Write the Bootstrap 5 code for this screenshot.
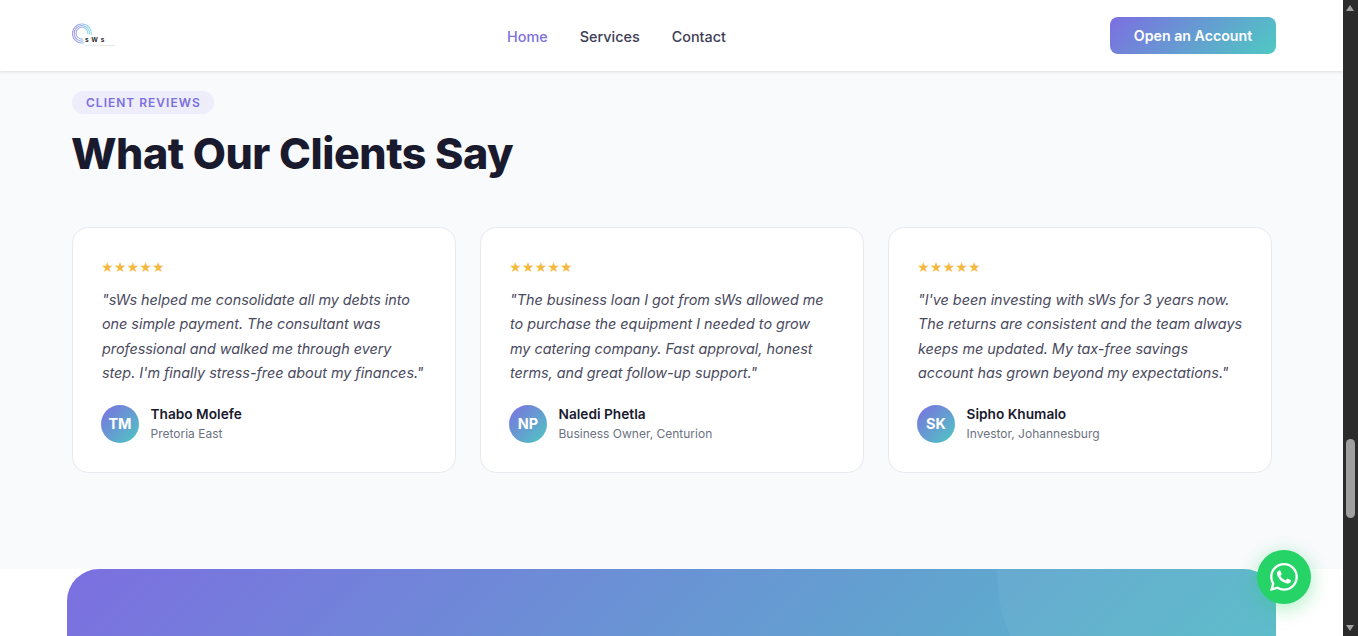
<!DOCTYPE html>
<html lang="en">
<head>
<meta charset="utf-8">
<title>Client Reviews</title>
<link href="https://cdn.jsdelivr.net/npm/bootstrap@5.3.0/dist/css/bootstrap.min.css" rel="stylesheet">
<style>
html,body{height:100%;overflow:hidden;margin:0}
body{font-family:Inter,"Liberation Sans",sans-serif;color:#1a1a2e;background:#fff}
.page-shell{width:1358px;height:636px;overflow:hidden;position:relative}
.page-main{width:1343px;height:636px;overflow:hidden}
.top-bar{height:71px;background:#fff;box-shadow:0 1px 3px rgba(26,26,46,.12);position:relative;z-index:2;padding:0 67px 0 72px}
.logo-box{width:44px;height:28px;flex:none}
.top-links{gap:32px;margin-left:7px;margin-top:3px}
.top-link{font-size:14.4px;font-weight:500;color:#3d3d56;text-decoration:none}
.top-link.is-active{color:#7c6fe0}
.open-btn{width:166px;height:37px;border-radius:8px;border:0;color:#fff;font-size:14.2px;font-weight:600;background:linear-gradient(135deg,#7c6fe0,#4ec9c3);padding:0}
.reviews-band{height:498px;background:#f9fafc;padding:18px 71px 0 72px}
.eyebrow{display:inline-block;height:23px;line-height:23px;padding:0 13px 0 14px;border-radius:50px;background:#eeedfb;color:#7c6fe0;font-size:12px;font-weight:600;letter-spacing:1px}
.big-title{font-size:43px;line-height:1.2;font-weight:800;color:#1a1a2e;margin:14px 0 0 -1px;letter-spacing:-.45px}
.review-row{display:grid;grid-template-columns:repeat(3,384px);gap:24px;margin-top:47px}
.review-box{height:246px;background:#fff;border:1px solid #e6e9f0;border-radius:16px;padding:30px 28px 0}
.stars{color:#f4b93e;font-size:12.2px;line-height:20px;height:20px}
.quote{font-size:14.4px;line-height:24.48px;font-style:italic;color:#4a4a5e;margin:10px 0 0;padding-left:1px;white-space:nowrap;letter-spacing:-.03px}
.person{margin-top:18px;gap:11.5px}
.avatar{width:38px;height:38px;border-radius:50%;background:linear-gradient(135deg,#7c6fe0,#4ec9c3);color:#fff;font-weight:700;font-size:14.4px;flex:none}
.person-info{padding-bottom:2px}
.person-name{font-size:13.7px;font-weight:600;line-height:20px;color:#1a1a2e}
.person-role{font-size:12px;line-height:19px;color:#6b7280}
.cta-band{height:67px;background:#fff;padding-left:67px}
.cta-panel{width:1209px;height:330px;border-radius:32px 32px 0 0;background:linear-gradient(135deg,#7c6fe0,#4ec9c3);position:relative;overflow:hidden}
.cta-ring{position:absolute;left:930px;top:-145px;width:300px;height:300px;border-radius:50%;background:rgba(255,255,255,.05)}
.wa-btn{position:absolute;right:47px;bottom:32px;width:54px;height:54px;border-radius:50%;background:#25d366;box-shadow:0 4px 20px rgba(37,211,102,.4);z-index:5}
.fake-scroll{position:absolute;top:0;right:0;width:15px;height:636px;background:#2b2b2b}
.scroll-thumb{position:absolute;top:439px;left:3px;width:9px;height:79px;border-radius:5px;background:#9f9f9f}
.arrow-up,.arrow-down{position:absolute;left:3px;width:0;height:0;border-left:4.5px solid transparent;border-right:4.5px solid transparent}
.arrow-up{top:5px;border-bottom:6px solid #9f9f9f}
.arrow-down{bottom:5px;border-top:6px solid #9f9f9f}
</style>
</head>
<body>
<div class="page-shell">
  <div class="page-main">
    <nav class="top-bar d-flex align-items-center justify-content-between">
      <a href="#" class="logo-box d-block">
        <svg width="44" height="28" viewBox="0 0 44 28" role="img" aria-label="sWs logo">
          <defs><linearGradient id="lg" gradientUnits="userSpaceOnUse" x1="1" y1="0" x2="20" y2="0"><stop offset="0" stop-color="#a79ae8"/><stop offset="1" stop-color="#92e4ea"/></linearGradient></defs>
          <g fill="none" stroke="url(#lg)" stroke-width="1.1">
            <path d="M12 20.8A9.5 9.5 0 1 1 19.3 13"/>
            <path d="M11.5 18.9A7.7 7.7 0 1 1 17.5 12.5"/>
            <path d="M11 17A5.9 5.9 0 1 1 15.8 12"/>
          </g>
          <text x="13" y="20" font-family="Liberation Sans" font-size="6.5" font-weight="700" fill="#222" letter-spacing="3">sWs</text>
          <rect x="13" y="23" width="30" height=".7" fill="#dcdce2"/>
        </svg>
      </a>
      <div class="top-links d-flex align-items-center">
        <a class="top-link is-active" href="#">Home</a>
        <a class="top-link" href="#">Services</a>
        <a class="top-link" href="#">Contact</a>
      </div>
      <button class="open-btn btn" type="button">Open an Account</button>
    </nav>
    <section class="reviews-band">
      <span class="eyebrow">CLIENT REVIEWS</span>
      <h2 class="big-title">What Our Clients Say</h2>
      <div class="review-row">
        <article class="review-box">
          <div class="stars">★★★★★</div>
          <p class="quote">"sWs helped me consolidate all my debts into<br>one simple payment. The consultant was<br>professional and walked me through every<br>step. I'm finally stress-free about my finances."</p>
          <div class="person d-flex align-items-center">
            <div class="avatar d-flex align-items-center justify-content-center">TM</div>
            <div class="person-info"><div class="person-name">Thabo Molefe</div><div class="person-role">Pretoria East</div></div>
          </div>
        </article>
        <article class="review-box">
          <div class="stars">★★★★★</div>
          <p class="quote">"The business loan I got from sWs allowed me<br>to purchase the equipment I needed to grow<br>my catering company. Fast approval, honest<br>terms, and great follow-up support."</p>
          <div class="person d-flex align-items-center">
            <div class="avatar d-flex align-items-center justify-content-center">NP</div>
            <div class="person-info"><div class="person-name">Naledi Phetla</div><div class="person-role">Business Owner, Centurion</div></div>
          </div>
        </article>
        <article class="review-box">
          <div class="stars">★★★★★</div>
          <p class="quote">"I've been investing with sWs for 3 years now.<br>The returns are consistent and the team always<br>keeps me updated. My tax-free savings<br>account has grown beyond my expectations."</p>
          <div class="person d-flex align-items-center">
            <div class="avatar d-flex align-items-center justify-content-center">SK</div>
            <div class="person-info"><div class="person-name">Sipho Khumalo</div><div class="person-role">Investor, Johannesburg</div></div>
          </div>
        </article>
      </div>
    </section>
    <section class="cta-band">
      <div class="cta-panel"><div class="cta-ring"></div></div>
    </section>
  </div>
  <a class="wa-btn d-flex align-items-center justify-content-center" href="#" aria-label="WhatsApp">
    <svg width="28" height="28" viewBox="0 0 16 16" fill="#fff"><path d="M13.601 2.326A7.854 7.854 0 0 0 7.994 0C3.627 0 .068 3.558.064 7.926c0 1.399.366 2.76 1.057 3.965L0 16l4.204-1.102a7.933 7.933 0 0 0 3.79.965h.004c4.368 0 7.926-3.558 7.93-7.93A7.898 7.898 0 0 0 13.6 2.326zM7.994 14.521a6.573 6.573 0 0 1-3.356-.92l-.24-.144-2.494.654.666-2.433-.156-.251a6.56 6.56 0 0 1-1.007-3.505c0-3.626 2.957-6.584 6.591-6.584a6.56 6.56 0 0 1 4.66 1.931 6.557 6.557 0 0 1 1.928 4.66c-.004 3.639-2.961 6.592-6.592 6.592zm3.615-4.934c-.197-.099-1.17-.578-1.353-.646-.182-.065-.315-.099-.445.099-.133.197-.513.646-.627.775-.114.133-.232.148-.43.05-.197-.1-.836-.308-1.592-.985-.59-.525-.985-1.175-1.103-1.372-.114-.198-.011-.304.088-.403.087-.088.197-.232.296-.346.1-.114.133-.198.198-.33.065-.134.034-.248-.015-.347-.05-.099-.445-1.076-.612-1.47-.16-.389-.323-.335-.445-.34-.114-.007-.247-.007-.38-.007a.729.729 0 0 0-.529.247c-.182.198-.691.677-.691 1.654 0 .977.71 1.916.81 2.049.098.133 1.394 2.132 3.383 2.992.47.205.84.326 1.129.418.475.152.904.129 1.246.08.38-.058 1.171-.48 1.338-.943.164-.464.164-.86.114-.943-.049-.084-.182-.133-.38-.232z"/></svg>
  </a>
  <div class="fake-scroll"><span class="arrow-up"></span><span class="scroll-thumb"></span><span class="arrow-down"></span></div>
</div>
<script src="https://cdn.jsdelivr.net/npm/bootstrap@5.3.0/dist/js/bootstrap.bundle.min.js"></script>
</body>
</html>
